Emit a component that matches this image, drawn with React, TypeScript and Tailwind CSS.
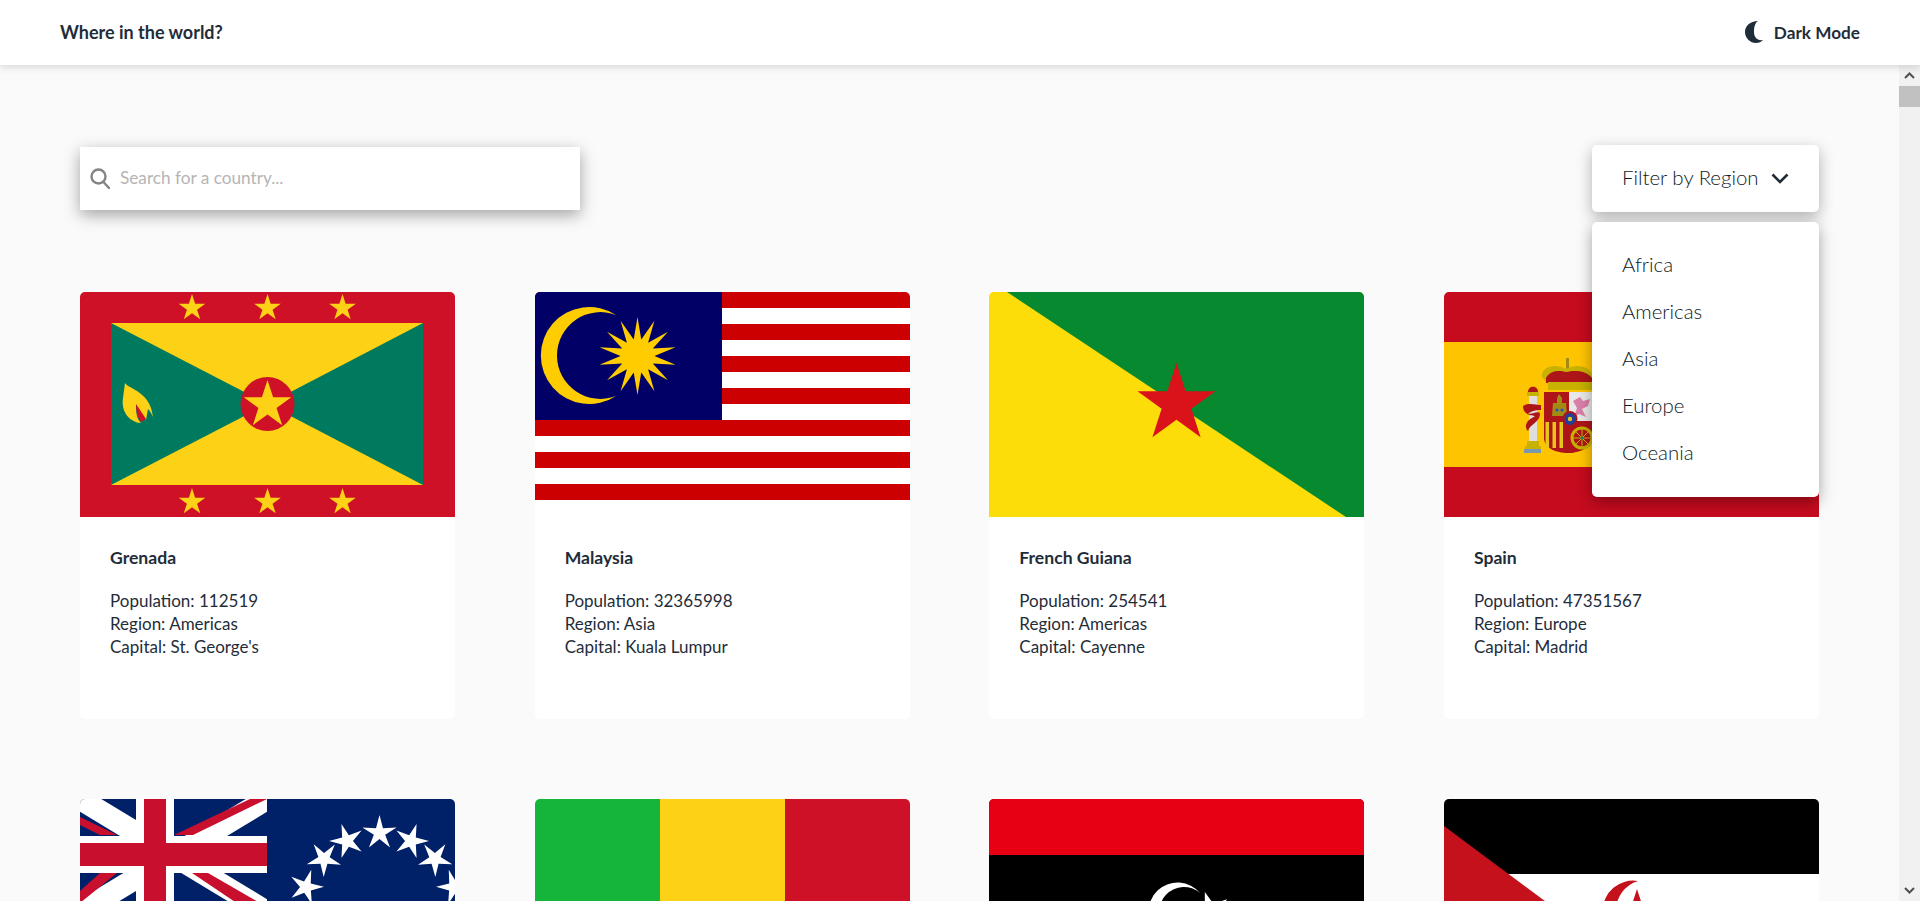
import React from "react";

function star(cx: number, cy: number, r: number, inner = 0.382, rot = 0) {
  const pts: string[] = [];
  for (let i = 0; i < 10; i++) {
    const a = -Math.PI / 2 + (rot * Math.PI) / 180 + (i * Math.PI) / 5;
    const rr = i % 2 === 0 ? r : r * inner;
    pts.push(`${(cx + rr * Math.cos(a)).toFixed(2)},${(cy + rr * Math.sin(a)).toFixed(2)}`);
  }
  return pts.join(" ");
}

function sun(cx: number, cy: number, R: number, r: number, n: number) {
  const pts: string[] = [];
  for (let i = 0; i < n * 2; i++) {
    const a = -Math.PI / 2 + (i * Math.PI) / n;
    const rr = i % 2 === 0 ? R : r;
    pts.push(`${(cx + rr * Math.cos(a)).toFixed(2)},${(cy + rr * Math.sin(a)).toFixed(2)}`);
  }
  return pts.join(" ");
}

const Svg = ({ children }: { children: React.ReactNode }) => (
  <svg viewBox="0 0 375 225" width={375} height={225} className="block">
    {children}
  </svg>
);

const Grenada = () => (
  <Svg>
    <rect width="375" height="225" fill="#ce1126" />
    <rect x="31" y="31" width="312" height="162" fill="#fcd116" />
    <polygon points="31,31 187.5,112 31,193" fill="#007a5e" />
    <polygon points="343,31 187.5,112 343,193" fill="#007a5e" />
    <circle cx="187.5" cy="112" r="27" fill="#ce1126" />
    <polygon points={star(187.5, 113, 25)} fill="#fcd116" />
    {[112, 187.5, 262.5].map((x) => (
      <React.Fragment key={x}>
        <polygon points={star(x, 16, 14)} fill="#fcd116" />
        <polygon points={star(x, 210, 14)} fill="#fcd116" />
      </React.Fragment>
    ))}
    <path d="M45 91 C50 98 70 99 73 125 C71 121 70 119 68 117 L66 128 L56 113 C56 122 57 127 61 131 C48 130 41 118 43 106 Z" fill="#fcd116" />
    <path d="M56 112 L66 127 L61 130 C57 125 56 118 56 112 Z" fill="#ce1126" />
  </Svg>
);

const Malaysia = () => (
  <Svg>
    <rect width="375" height="225" fill="#fff" />
    {[0, 2, 4, 6, 8, 10, 12].map((i) => (
      <rect key={i} y={i * 16} width="375" height="16" fill="#cc0001" />
    ))}
    <rect width="187" height="128" fill="#010066" />
    <path d="M81 23 A48.5 48.5 0 1 0 81 104 A43.4 43.4 0 1 1 81 23 Z" fill="#ffcc00" />
    <polygon points={sun(102.5, 64, 39, 17, 14)} fill="#ffcc00" />
  </Svg>
);

const Guiana = () => (
  <Svg>
    <rect width="375" height="225" fill="#fcdd09" />
    <polygon points="18,0 375,0 375,225 357,225" fill="#078930" />
    <polygon points={star(187.5, 112, 41)} fill="#da121a" />
  </Svg>
);

const Spain = () => (
  <Svg>
    <rect width="375" height="225" fill="#c60b1e" />
    <rect y="50" width="375" height="125" fill="#ffc400" />
    {/* pillar */}
    <path d="M84 100 C84 93 94 93 94 100 Z" fill="#ad1519" />
    <rect x="83" y="100" width="12" height="4" fill="#c8b100" />
    <rect x="85" y="104" width="8" height="47" fill="#dedede" />
    <rect x="83" y="149" width="12" height="5" fill="#c8b100" />
    <rect x="81" y="154" width="16" height="3" fill="#c8b100" />
    <rect x="80" y="157" width="17" height="4" fill="#7a97b0" />
    <path d="M79 114 C84 110 92 113 97 113 L97 118 C90 118 86 120 84 122 C88 122 96 118 96 122 C96 130 86 132 84 139 C81 136 81 132 85 128 C89 125 90 125 91 124 C86 124 79 122 79 114 Z" fill="#ad1519" />
    {/* crown */}
    <rect x="122" y="66" width="3" height="12" fill="#a38a12" />
    <path d="M98 85 C97 74 112 71 122 77 C132 71 148 74 148 85 L142 92 L104 92 Z" fill="#c8b100" />
    <path d="M102 86 C106 78 116 78 122 80 C130 78 142 78 148 86 L148 91 L102 91 Z" fill="#ad1519" />
    <rect x="104" y="90" width="44" height="8" fill="#c8b100" />
    {/* shield */}
    <path d="M100 100 H148 V148 C148 156 134 161 124 161 C112 161 100 156 100 146 Z" fill="#ad1519" />
    <rect x="125" y="100" width="23" height="29" fill="#e8e8e8" />
    <path d="M129 109 L136 105 L139 109 L146 107 L144 114 L138 117 L142 125 L135 122 L130 125 L133 116 Z" fill="#db7fa8" />
    <path d="M108 124 L109 111 L113 111 L113 106 L115 102 L118 106 L118 111 L122 111 L123 124 Z" fill="#a38a12" />
    <circle cx="113" cy="118" r="1.6" fill="#1f57c8" />
    <circle cx="118" cy="118" r="1.6" fill="#1f57c8" />
    {[100, 107, 114].map((x) => (
      <rect key={x} x={x + 1.5} y="130" width="3.5" height="26" fill="#e6c619" />
    ))}
    <path d="M124 130 H148 V148 C148 155 136 160 125 161 Z" fill="#ad1519" />
    <circle cx="138" cy="146" r="10" fill="none" stroke="#c8b100" strokeWidth="3" />
    <path d="M128 146 H148 M138 136 V156 M131 139 L145 153 M145 139 L131 153" stroke="#c8b100" strokeWidth="1" />
    <circle cx="138" cy="146" r="1.5" fill="#058e6e" />
    <ellipse cx="126" cy="127" rx="7.5" ry="8" fill="#ad1519" />
    <ellipse cx="126" cy="127" rx="5.5" ry="6" fill="#1f3f9c" />
    <circle cx="126" cy="127" r="2.2" fill="#e6c619" />
  </Svg>
);

const Cook = () => {
  const stars: [number, number, number][] = [
    [226, 88, -55],
    [244, 60, -35],
    [267, 42, -18],
    [299.5, 34, 0],
    [331, 42, 18],
    [355, 60, 35],
    [374, 88, 55],
  ];
  return (
    <Svg>
      <rect width="375" height="225" fill="#002068" />
      <svg x="0" y="0" width="187" height="113" viewBox="0 0 187 113">
        <path d="M0 0 L187 113 M187 0 L0 113" stroke="#fff" strokeWidth="22" />
        <polygon points="0,18 37,36 20,36 0,26" fill="#c8102e" />
        <polygon points="170,0 187,0 113,36 94,36" fill="#c8102e" />
        <polygon points="20,74 37,74 0,104 0,92" fill="#c8102e" />
        <polygon points="112,74 128,74 187,108 187,113 170,113" fill="#c8102e" />
        <rect x="56" y="0" width="38" height="113" fill="#fff" />
        <rect x="0" y="37" width="187" height="37" fill="#fff" />
        <rect x="64" y="0" width="22" height="113" fill="#c8102e" />
        <rect x="0" y="44" width="187" height="23" fill="#c8102e" />
      </svg>
      {stars.map(([x, y, r]) => (
        <polygon key={x} points={star(x, y, 18, 0.33, r)} fill="#fff" />
      ))}
    </Svg>
  );
};

const Mali = () => (
  <Svg>
    <rect width="125" height="225" fill="#14b53a" />
    <rect x="125" width="125" height="225" fill="#fcd116" />
    <rect x="250" width="125" height="225" fill="#ce1126" />
  </Svg>
);

const Libya = () => (
  <Svg>
    <rect width="375" height="225" fill="#000" />
    <rect width="375" height="56" fill="#e70013" />
    <path d="M211 94 A29 29 0 1 0 211 131 A24.5 24.5 0 1 1 211 94 Z" fill="#fff" />
    <polygon points={star(222, 112, 20, 0.382, -90)} fill="#fff" />
  </Svg>
);

const Sahara = () => (
  <Svg>
    <rect width="375" height="225" fill="#000" />
    <rect y="75" width="375" height="75" fill="#fff" />
    <rect y="150" width="375" height="75" fill="#007a3d" />
    <polygon points="0,27 115,112.5 0,198" fill="#c4111b" />
    <path d="M194 82 A30.4 30.4 0 1 0 194 142 A31.4 31.4 0 0 1 194 82 Z" fill="#c4111b" />
    <polygon points={star(193, 113, 23)} fill="#c4111b" />
  </Svg>
);

type Card = { flag: React.ReactNode; key: string; name?: string; pop?: string; region?: string; capital?: string };

const cards: Card[] = [
  { key: "gd", flag: <Grenada />, name: "Grenada", pop: "112519", region: "Americas", capital: "St. George's" },
  { key: "my", flag: <Malaysia />, name: "Malaysia", pop: "32365998", region: "Asia", capital: "Kuala Lumpur" },
  { key: "gf", flag: <Guiana />, name: "French Guiana", pop: "254541", region: "Americas", capital: "Cayenne" },
  { key: "es", flag: <Spain />, name: "Spain", pop: "47351567", region: "Europe", capital: "Madrid" },
  { key: "ck", flag: <Cook /> },
  { key: "ml", flag: <Mali /> },
  { key: "ly", flag: <Libya /> },
  { key: "eh", flag: <Sahara /> },
];

export default function App() {
  return (
    <div className="h-[901px] w-[1920px] overflow-hidden flex flex-col bg-[#fafafa] font-['Lato','Noto_Sans',sans-serif] text-[#1f2d3a]">
      <header className="relative z-20 h-[65px] shrink-0 bg-white flex items-center justify-between px-[60px] shadow-[0_2px_8px_rgba(0,0,0,0.15)]">
        <h1 className="text-[18px] font-bold">Where in the world?</h1>
        <div className="flex items-center gap-[11px]">
          <svg width="18" height="22" viewBox="0 0 18 22" fill="#1f2d3a">
            <path d="M13 0 C5 0 0 5 0 11 C0 17 5 22 11 22 C14 22 16 21 18 19 C12 20 9 16 9 11 C9 6 10 2 13 0 Z" />
          </svg>
          <span className="text-[17.2px] font-bold">Dark Mode</span>
        </div>
      </header>
      <div className="flex flex-1 min-h-0">
        <main className="flex-1 overflow-hidden px-[80px]">
          <div className="relative z-10 flex justify-between items-center mt-[80px] h-[67px]">
            <div className="flex items-center w-[500px] h-[63px] bg-white pl-[10px] shadow-[0_5px_15px_rgba(0,0,0,0.35)]">
              <svg width="20" height="21" viewBox="0 0 20 21" fill="none" stroke="#848484" strokeWidth="2.4">
                <circle cx="8.5" cy="8.5" r="7" />
                <path d="M13.5 14 L19 20" strokeLinecap="round" />
              </svg>
              <span className="ml-[10px] text-[17.2px] pb-[1px] text-[#b5b5b5]">Search for a country...</span>
            </div>
            <div className="relative w-[227px]">
              <div className="flex items-center h-[67px] bg-white rounded-[5px] pl-[30px] gap-[12px] text-[20.4px] font-light text-[#0f1a24] shadow-[0_5px_15px_rgba(0,0,0,0.3)]">
                <span className="pb-[2px]">Filter by Region</span>
                <svg width="18" height="11" viewBox="0 0 18 11" fill="none" stroke="#1f2d3a" strokeWidth="2.6">
                  <path d="M1.5 1.5 L9 9 L16.5 1.5" />
                </svg>
              </div>
              <ul className="absolute top-[77px] left-0 w-[227px] h-[275px] bg-white rounded-[5px] pl-[30px] pt-[19px] text-[20.4px] font-light text-[#0f1a24] shadow-[0_5px_15px_rgba(0,0,0,0.35)]">
                {["Africa", "Americas", "Asia", "Europe", "Oceania"].map((r) => (
                  <li key={r} className="h-[47px] flex items-center">{r}</li>
                ))}
              </ul>
            </div>
          </div>
          <div className="grid grid-cols-[repeat(4,375px)] justify-between gap-y-[80px] mt-[80px]">
            {cards.map((c) => (
              <article key={c.key} className="w-[375px] h-[427px] bg-white rounded-[5px] overflow-hidden">
                <div className="h-[225px] overflow-hidden">{c.flag}</div>
                {c.name && (
                  <div className="px-[30px] pt-[30px]">
                    <h2 className="text-[17.6px] leading-[22px] font-bold">{c.name}</h2>
                    <div className="mt-[20px] text-[17px] leading-[23px]">
                      <p>Population: {c.pop}</p>
                      <p>Region: {c.region}</p>
                      <p>Capital: {c.capital}</p>
                    </div>
                  </div>
                )}
              </article>
            ))}
          </div>
        </main>
        <div className="w-[21px] shrink-0 bg-[#f1f1f1] flex flex-col">
          <div className="h-[21px] flex items-center justify-center">
            <svg width="11" height="7" viewBox="0 0 11 7" fill="none" stroke="#505050" strokeWidth="2">
              <path d="M1 6 L5.5 1.5 L10 6" />
            </svg>
          </div>
          <div className="h-[21px] bg-[#c1c1c1]" />
          <div className="flex-1" />
          <div className="h-[21px] flex items-center justify-center">
            <svg width="11" height="7" viewBox="0 0 11 7" fill="none" stroke="#505050" strokeWidth="2">
              <path d="M1 1 L5.5 5.5 L10 1" />
            </svg>
          </div>
        </div>
      </div>
    </div>
  );
}
